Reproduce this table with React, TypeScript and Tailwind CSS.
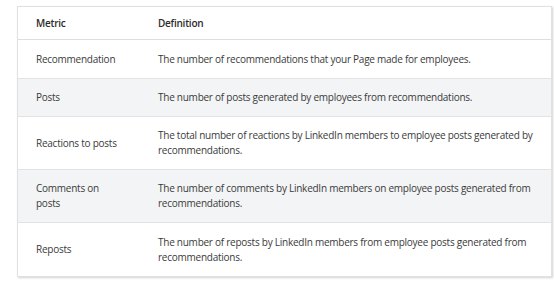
import React from "react";

const rows: { m: string; d: string }[] = [
  { m: "Recommendation", d: "The number of recommendations that your Page made for employees." },
  { m: "Posts", d: "The number of posts generated by employees from recommendations." },
  { m: "Reactions to posts", d: "The total number of reactions by LinkedIn members to employee posts generated by recommendations." },
  { m: "Comments on posts", d: "The number of comments by LinkedIn members on employee posts generated from recommendations." },
  { m: "Reposts", d: "The number of reposts by LinkedIn members from employee posts generated from recommendations." },
];

const heights = ["h-[39px]", "h-[38px]", "h-[53px]", "h-[53px]", "h-[53px]"];

export default function App() {
  return (
    <div className="w-[554px] h-[283px] bg-white pl-[17px] pr-[2px] pt-[6px]" style={{ fontFamily: '"Open Sans", "Noto Sans", sans-serif' }}>
      <div className="w-[535px] border border-[#e1e1e1] shadow-[1px_1px_2px_rgba(0,0,0,0.18)] bg-white text-[10px] tracking-[-0.25px] leading-[15px] text-[#3a3a3a]">
        <div className="flex h-[33px] items-center border-b border-[#dedede]">
          <div className="w-[121px] shrink-0 pl-[18px] font-semibold text-[#2b2b2b]">Metric</div>
          <div className="flex-1 pl-[19px] font-semibold text-[#2b2b2b]">Definition</div>
        </div>
        {rows.map((r, i) => (
          <div
            key={r.m}
            className={`flex items-center ${heights[i]} ${i < rows.length - 1 ? "border-b border-[#e3e3e3]" : ""} ${i % 2 === 1 ? "bg-[#f3f4f5]" : "bg-white"}`}
          >
            <div className="w-[121px] shrink-0 pl-[18px] pr-[18px]">{r.m}</div>
            <div className="flex-1 pl-[19px] pr-[16px]">{r.d}</div>
          </div>
        ))}
      </div>
    </div>
  );
}
